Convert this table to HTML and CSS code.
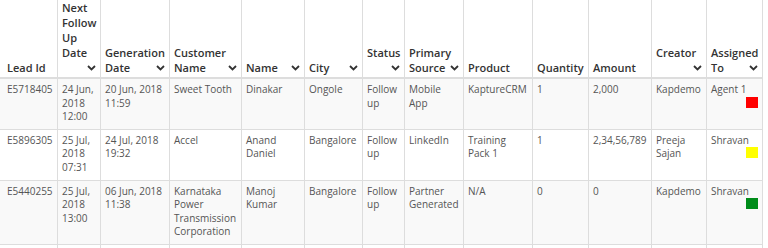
FILE: index.html
```html
<!DOCTYPE html>
<html>
<head>
<meta charset="utf-8">
<link rel="stylesheet" href="styles.css">
</head>
<body>
<table class="leads">
  <thead>
    <tr>
      <th class="c1">Lead Id</th>
      <th class="c2">Next Follow Up Date<span class="sort"><svg viewBox="0 0 9 6" width="9" height="6"><polyline points="1,1 4.5,4.5 8,1"/></svg></span></th>
      <th class="c3">Generation Date<span class="sort"><svg viewBox="0 0 9 6" width="9" height="6"><polyline points="1,1 4.5,4.5 8,1"/></svg></span></th>
      <th class="c4">Customer Name<span class="sort"><svg viewBox="0 0 9 6" width="9" height="6"><polyline points="1,1 4.5,4.5 8,1"/></svg></span></th>
      <th class="c5">Name<span class="sort"><svg viewBox="0 0 9 6" width="9" height="6"><polyline points="1,1 4.5,4.5 8,1"/></svg></span></th>
      <th class="c6">City<span class="sort"><svg viewBox="0 0 9 6" width="9" height="6"><polyline points="1,1 4.5,4.5 8,1"/></svg></span></th>
      <th class="c7">Status<span class="sort"><svg viewBox="0 0 9 6" width="9" height="6"><polyline points="1,1 4.5,4.5 8,1"/></svg></span></th>
      <th class="c8">Primary Source<span class="sort"><svg viewBox="0 0 9 6" width="9" height="6"><polyline points="1,1 4.5,4.5 8,1"/></svg></span></th>
      <th class="c9">Product</th>
      <th class="c10">Quantity</th>
      <th class="c11">Amount</th>
      <th class="c12">Creator<span class="sort"><svg viewBox="0 0 9 6" width="9" height="6"><polyline points="1,1 4.5,4.5 8,1"/></svg></span></th>
      <th class="c13">Assigned To<span class="sort"><svg viewBox="0 0 9 6" width="9" height="6"><polyline points="1,1 4.5,4.5 8,1"/></svg></span></th>
    </tr>
  </thead>
  <tbody>
    <tr class="odd">
      <td class="first">E5718405</td>
      <td>24 Jun, 2018 12:00</td>
      <td>20 Jun, 2018 11:59</td>
      <td>Sweet Tooth</td>
      <td>Dinakar</td>
      <td>Ongole</td>
      <td>Follow up</td>
      <td>Mobile App</td>
      <td>KaptureCRM</td>
      <td>1</td>
      <td>2,000</td>
      <td>Kapdemo</td>
      <td>Agent 1<span class="flag red"></span></td>
    </tr>
    <tr>
      <td class="first">E5896305</td>
      <td>25 Jul, 2018 07:31</td>
      <td>24 Jul, 2018 19:32</td>
      <td>Accel</td>
      <td>Anand Daniel</td>
      <td>Bangalore</td>
      <td>Follow up</td>
      <td>LinkedIn</td>
      <td>Training Pack 1</td>
      <td>1</td>
      <td>2,34,56,789</td>
      <td>Preeja Sajan</td>
      <td>Shravan<span class="flag yellow"></span></td>
    </tr>
    <tr class="odd">
      <td class="first">E5440255</td>
      <td>25 Jul, 2018 13:00</td>
      <td>06 Jun, 2018 11:38</td>
      <td>Karnataka Power Transmission Corporation</td>
      <td>Manoj Kumar</td>
      <td>Bangalore</td>
      <td>Follow up</td>
      <td>Partner Generated</td>
      <td>N/A</td>
      <td>0</td>
      <td>0</td>
      <td>Kapdemo</td>
      <td>Shravan<span class="flag green"></span></td>
    </tr>
    <tr class="empty">
      <td class="first">&nbsp;</td><td></td><td></td><td></td><td></td><td></td><td></td><td></td><td></td><td></td><td></td><td></td><td></td>
    </tr>
  </tbody>
</table>
</body>
</html>
```

FILE: styles.css
```css
html, body {
  margin: 0;
  padding: 0;
  background: #ffffff;
  overflow: hidden;
}

.leads {
  border-collapse: separate;
  border-spacing: 0;
  table-layout: fixed;
  width: 763px;
  font-family: "Open Sans", "Liberation Sans", sans-serif;
}

.leads th,
.leads td {
  box-sizing: border-box;
  border-right: 1px solid #dddddd;
  text-align: left;
  overflow-wrap: normal;
}

.leads th {
  font-size: 11px;
  line-height: 15px;
  font-weight: 600;
  color: #333333;
  vertical-align: bottom;
  padding: 0 4px 2px 4px;
  border-bottom: 2px solid #dddddd;
}

.leads td {
  font-size: 10px;
  line-height: 13.6px;
  color: #555555;
  vertical-align: top;
  padding: 4px 4px 5px 4px;
  border-bottom: 1px solid #dddddd;
}

.leads th.c1,
.leads td.first {
  padding-left: 7px;
}

.leads tr.odd td {
  background: #f9f9f9;
}

.leads tr.empty td {
  height: 30px;
}

.sort {
  float: right;
  height: 15px;
  width: 10px;
  margin-left: 3px;
  display: flex;
  align-items: center;
  justify-content: flex-end;
}

.sort svg {
  display: block;
  fill: none;
  stroke: #333333;
  stroke-width: 1.8;
}

.flag {
  display: block;
  width: 12px;
  height: 11px;
  margin-left: auto;
}

.flag.red { background: #ff0000; }
.flag.yellow { background: #ffff00; }
.flag.green { background: #008c1a; }

.c1 { width: 58px; }
.c2 { width: 43px; }
.c3 { width: 69px; }
.c4 { width: 72px; }
.c5 { width: 63px; }
.c6 { width: 58px; }
.c7 { width: 42px; }
.c8 { width: 59px; }
.c9 { width: 69px; }
.c10 { width: 56px; }
.c11 { width: 63px; }
.c12 { width: 55px; }
.c13 { width: 56px; }
```
